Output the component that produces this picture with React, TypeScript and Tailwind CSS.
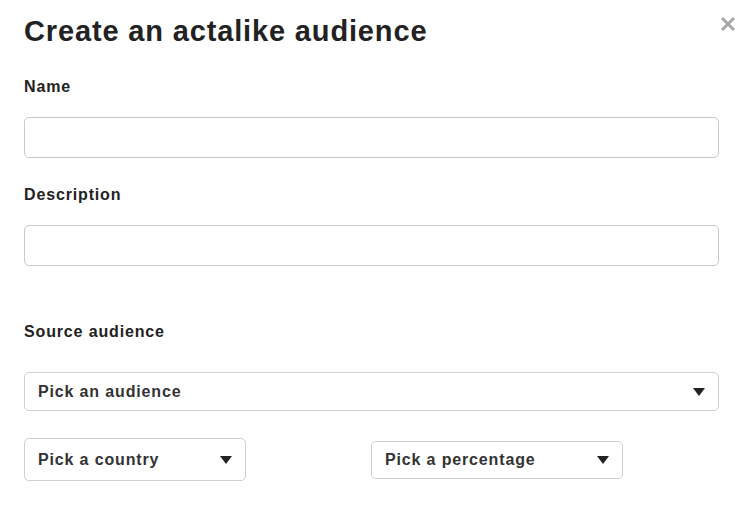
import React from 'react';

// Petite flèche pleine des listes déroulantes
const Caret = () => (
  <svg width="12" height="8" viewBox="0 0 12 8" className="shrink-0">
    <path d="M0 0 L12 0 L6 8 Z" fill="#222" />
  </svg>
);

const CloseIcon = () => (
  <svg width="16" height="16" viewBox="0 0 16 16">
    <path d="M2 2 L14 14 M14 2 L2 14" stroke="#a8a8a8" strokeWidth="3" strokeLinecap="butt" />
  </svg>
);

const Label = ({ children, className = '' }: { children: React.ReactNode; className?: string }) => (
  <div className={`text-[16px] leading-[18px] font-bold tracking-[0.85px] text-[#222] ${className}`}>{children}</div>
);

const TextInput = ({ className = '' }: { className?: string }) => (
  <input
    type="text"
    className={`block w-full h-[41px] rounded-[5px] border border-[#c8c8c8] bg-white px-3 outline-none ${className}`}
  />
);

const Select = ({ label, className = '' }: { label: string; className?: string }) => (
  <button
    type="button"
    className={`flex items-center justify-between rounded-[5px] border border-[#cfcfcf] bg-white pl-[13px] text-left ${className}`}
  >
    <span className="text-[16px] font-bold tracking-[0.85px] text-[#333]">{label}</span>
    <Caret />
  </button>
);

export default function App() {
  return (
    <div className="min-h-[520px] w-[748px] bg-white font-['Liberation_Sans',Arial,sans-serif]">
      <div className="relative pl-6 pr-[29px] pt-[14px]">
        <button type="button" className="absolute right-[12px] top-[16px]" aria-label="Fermer">
          <CloseIcon />
        </button>

        <h1 className="text-[29px] leading-[34px] font-bold tracking-[0.85px] text-[#222]">
          Create an actalike audience
        </h1>

        <Label className="mt-[30px]">Name</Label>
        <TextInput className="mt-[21px]" />

        <Label className="mt-[28px]">Description</Label>
        <TextInput className="mt-[21px]" />

        <Label className="mt-[57px]">Source audience</Label>
        <Select label="Pick an audience" className="mt-[31px] h-[39px] w-full pr-[13px]" />

        <div className="mt-[27px] flex items-start">
          <Select label="Pick a country" className="h-[43px] w-[222px] pr-[13px]" />
          <Select label="Pick a percentage" className="ml-[125px] mt-[3px] h-[38px] w-[252px] pr-[13px]" />
        </div>
      </div>
    </div>
  );
}
